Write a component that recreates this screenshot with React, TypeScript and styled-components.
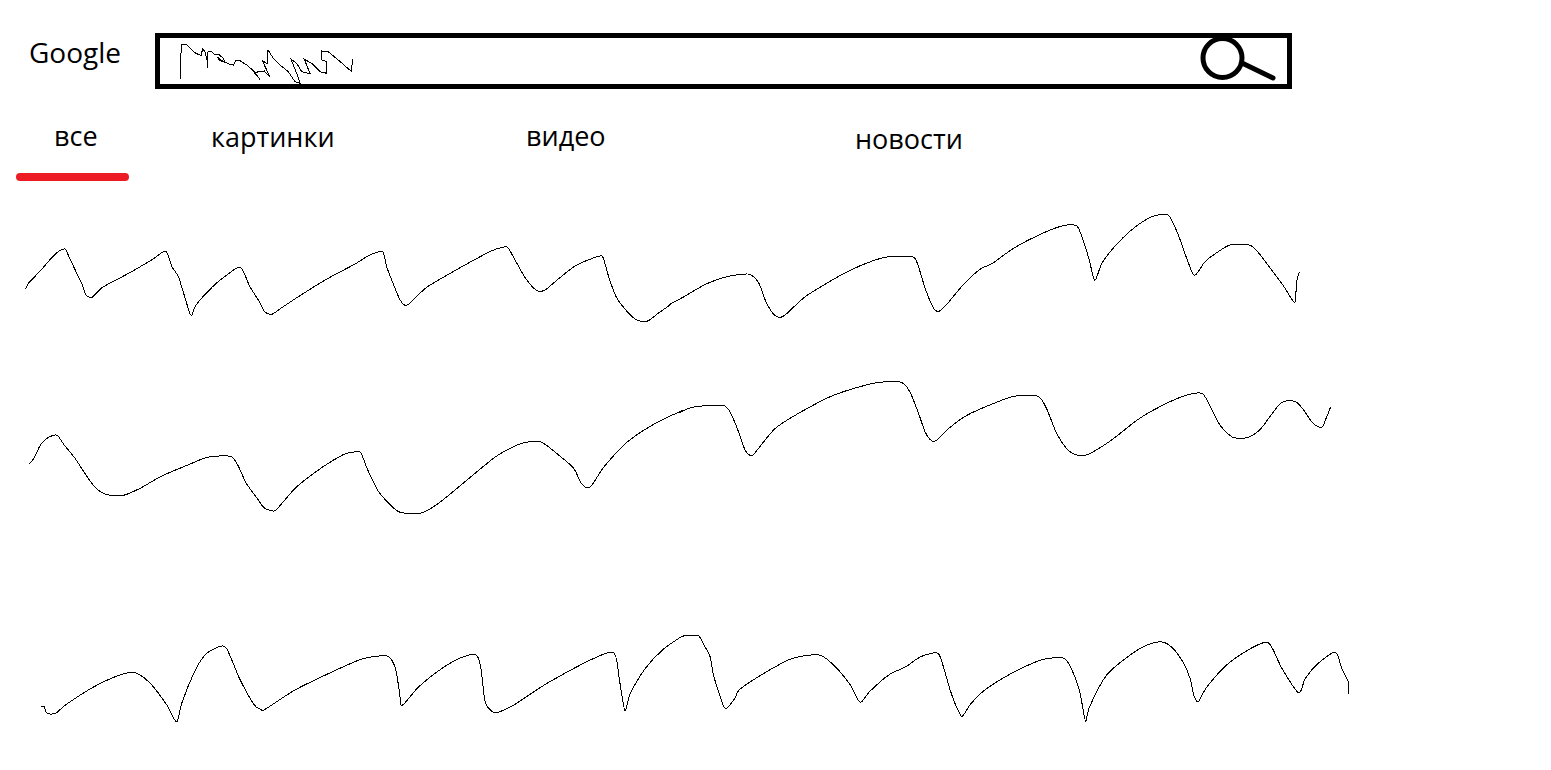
import styled, { createGlobalStyle } from "styled-components";

const GlobalStyle = createGlobalStyle`
  html, body {
    margin: 0;
    background: #fff;
    color: #000;
    font-family: "Open Sans", "Liberation Sans", sans-serif;
  }
`;

const Page = styled.div`
  width: 1551px;
  padding-top: 33px;
  display: flex;
  flex-direction: column;
`;

const Header = styled.header`
  display: flex;
  align-items: flex-start;
  padding-left: 29px;
`;

const Logo = styled.div`
  width: 126px;
  font-size: 28px;
  line-height: 38px;
`;

const SearchBar = styled.div`
  box-sizing: border-box;
  width: 1137px;
  height: 56px;
  border: 5px solid #000;
  padding-left: 18px;
  display: flex;
  justify-content: space-between;
  align-items: flex-start;
`;

const Scribble = styled.svg`
  display: block;
  margin-top: 5px;
  width: 180px;
  height: 43px;
`;

const SearchIcon = styled.svg`
  display: block;
  margin: -2px 10px 0 0;
  width: 80px;
  height: 47px;
`;

const Tabs = styled.nav`
  display: grid;
  grid-template-columns: 195px 315px 329px auto;
  padding-left: 16px;
  margin-top: 29px;
  align-items: start;
`;

const Tab = styled.a<{ $active?: boolean; $drop?: number }>`
  display: block;
  font-size: 27px;
  line-height: 36px;
  margin-top: ${({ $drop }) => $drop ?? 0}px;
  padding-left: ${({ $active }) => ($active ? 38 : 0)}px;

  ${({ $active }) =>
    $active &&
    `
    &::after {
      content: "";
      display: block;
      width: 113px;
      height: 8px;
      margin: 19px 0 0 -38px;
      border-radius: 4px;
      background: #ed1c24;
    }
  `}
`;

const Results = styled.main`
  display: flex;
  flex-direction: column;
  margin-top: 19px;
`;

const Line = styled.svg<{ $gap?: number }>`
  display: block;
  width: 1551px;
  margin-top: ${({ $gap }) => $gap ?? 0}px;
`;

// traced from the zoomed crops: [x origin, y origin, x scale, y scale, crop points]
type Crop = [number, number, number, number, number[]];
type Pt = [number, number];

const toPts = (crops: Crop[]): Pt[] =>
  crops.flatMap(([ox, oy, sx, sy, pts]) => {
    const out: Pt[] = [];
    for (let i = 0; i < pts.length; i += 2) {
      out.push([ox + pts[i] / sx, oy + pts[i + 1] / sy]);
    }
    return out;
  });

// catmull-rom through the traced points, low tension so the cusps stay sharp
const toPath = (pts: Pt[], k = 0.13) => {
  let d = `M${pts[0][0].toFixed(1)} ${pts[0][1].toFixed(1)}`;
  for (let i = 0; i < pts.length - 1; i++) {
    const p0 = pts[i - 1] ?? pts[i];
    const p1 = pts[i];
    const p2 = pts[i + 1];
    const p3 = pts[i + 2] ?? p2;
    const c1x = p1[0] + (p2[0] - p0[0]) * k;
    const c1y = p1[1] + (p2[1] - p0[1]) * k;
    const c2x = p2[0] - (p3[0] - p1[0]) * k;
    const c2y = p2[1] - (p3[1] - p1[1]) * k;
    d += `C${c1x.toFixed(1)} ${c1y.toFixed(1)} ${c2x.toFixed(1)} ${c2y.toFixed(1)} ${p2[0].toFixed(1)} ${p2[1].toFixed(1)}`;
  }
  return d;
};

const line1 = toPath(toPts([
  [10, 200, 2.376, 3, [37,267,45,248,70,215,100,172,118,152,132,148,140,170,155,210,172,255,180,285,190,292,197,290,220,262,260,235,300,207,340,177,370,154,385,200,400,230,415,290,430,346,442,315,480,262,510,230,547,202,570,260,590,300,605,335,622,343,640,328,695,282,760,232,820,192,850,168,875,156,887,157,895,200,910,250,925,295,935,313,947,313,990,262,1060,210,1110,175,1145,152,1170,142,1183,143,1200,180,1225,235,1250,270,1270,271,1300,240,1340,200,1380,177,1407,169,1420,220,1440,290,1470,340,1490,360,1515,363,1540,340,1568,315]],
  [660, 200, 2.376, 3, [25,312,60,288,105,255,150,233,180,225,213,223,235,250,250,300,268,340,285,352,300,342,345,290,400,247,445,215,500,185,540,171,595,169,610,185,630,265,650,325,663,334,680,315,720,255,760,208,790,190,840,145,900,105,955,78,990,78,1005,120,1020,180,1033,241,1050,190,1080,140,1120,90,1160,55,1180,46,1208,46,1230,100,1250,170,1270,226,1295,185,1330,152,1355,135,1400,135,1420,155,1450,205,1480,255,1508,307,1512,250,1519,216]],
]));

const line2 = toPath(toPts([
  [10, 370, 2.306, 3, [45,281,55,265,70,225,85,205,100,196,110,197,125,225,150,265,175,315,195,350,215,370,232,376,262,376,300,355,350,318,410,285,455,262,508,259,525,285,545,340,570,385,585,412,603,422,615,418,660,352,720,292,770,253,790,247,808,247,825,300,850,365,880,408,900,427,945,430,985,403,1040,345,1120,260,1170,225,1195,216,1225,216,1270,260,1300,295,1315,335,1325,350,1335,353,1345,340,1370,290,1420,220,1460,182,1500,152,1550,122]],
  [680, 370, 2.306, 3, [0,127,25,113,60,107,100,106,115,125,135,185,150,240,165,257,175,245,220,175,280,125,350,78,415,50,460,37,510,37,530,65,550,130,565,185,578,210,590,212,620,175,660,137,720,102,770,79,825,79,845,115,865,180,885,225,905,250,935,256,990,215,1060,145,1130,95,1175,73,1205,71,1225,115,1245,165,1275,202,1310,202,1340,175,1385,100,1418,94,1435,115,1460,160,1480,172,1490,145,1500,112]],
]));

const line3 = toPath(toPts([
  [30, 625, 2.34, 3, [27,244,33,245,40,265,60,265,85,238,150,185,215,148,250,145,285,180,320,240,343,291,355,235,385,140,408,92,430,72,458,67,490,160,525,240,540,253,550,253,620,195,700,145,770,105,810,94,838,94,855,130,865,205,871,241,910,185,970,125,1015,95,1045,91,1055,130,1065,230,1080,258,1095,262,1135,238,1210,175,1320,100,1367,85,1380,170,1392,256,1405,205,1440,130,1480,75,1525,35]],
  [690, 625, 2.34, 3, [0,33,20,32,35,65,47,95,55,150,68,205,83,251,105,220,115,195,160,155,230,105,265,93,305,91,340,125,375,180,398,232,420,200,465,150,505,125,540,95,580,85,595,135,610,200,625,250,637,274,655,240,685,200,745,150,810,110,840,100,875,100,890,125,910,190,918,240,926,289,935,245,975,150,1030,90,1070,60,1105,51,1130,70,1155,115,1170,160,1180,215,1190,229,1210,185,1260,115,1320,65,1355,55,1385,130,1424,203,1440,160,1470,115,1510,82,1525,130,1540,170,1541,208]],
]));

const scribble = toPts([
  [-3, -3, 3, 3, [15,118,17,50,20,13,33,13,50,30,62,40,75,45,80,45,82,25,90,35,96,60,97,85,99,35,110,35,120,45,130,42,145,55,150,65,135,62,125,50,145,65,165,73,175,75,182,62,195,62,215,75,235,92,255,118,238,100,250,95,268,93]],
  [87, -3, 3, 3, [15,111,-9,60,6,72,9,30,25,55,45,75,70,95,90,125,105,130,95,100,78,58,95,70,110,95,130,100,135,100,118,58,140,70,165,95,185,100,185,65,170,60,170,33,190,35,220,60,260,95,262,58]],
])
  .map((p) => p.map((n) => n.toFixed(1)).join(","))
  .join(" ");

const Squiggle = ({ d, y, height, gap }: { d: string; y: number; height: number; gap?: number }) => (
  <Line $gap={gap} height={height} viewBox={`0 ${y} 1551 ${height}`}>
    <path d={d} fill="none" stroke="#000" strokeWidth="1" shapeRendering="crispEdges" />
  </Line>
);

export default function App() {
  return (
    <Page>
      <GlobalStyle />
      <Header>
        <Logo>Google</Logo>
        <SearchBar>
          <Scribble viewBox="0 0 180 43">
            <polyline points={scribble} fill="none" stroke="#000" strokeWidth="1" shapeRendering="crispEdges" />
          </Scribble>
          <SearchIcon viewBox="0 0 80 47">
            <circle cx="25.5" cy="22" r="19.5" fill="none" stroke="#000" strokeWidth="5" />
            <line x1="45" y1="27" x2="76" y2="42" stroke="#000" strokeWidth="5" strokeLinecap="round" />
          </SearchIcon>
        </SearchBar>
      </Header>
      <Tabs>
        <Tab $active>все</Tab>
        <Tab $drop={1}>картинки</Tab>
        <Tab>видео</Tab>
        <Tab $drop={3}>новости</Tab>
      </Tabs>
      <Results>
        <Squiggle d={line1} y={200} height={130} />
        <Squiggle d={line2} y={370} height={160} gap={40} />
        <Squiggle d={line3} y={625} height={105} gap={95} />
      </Results>
    </Page>
  );
}
